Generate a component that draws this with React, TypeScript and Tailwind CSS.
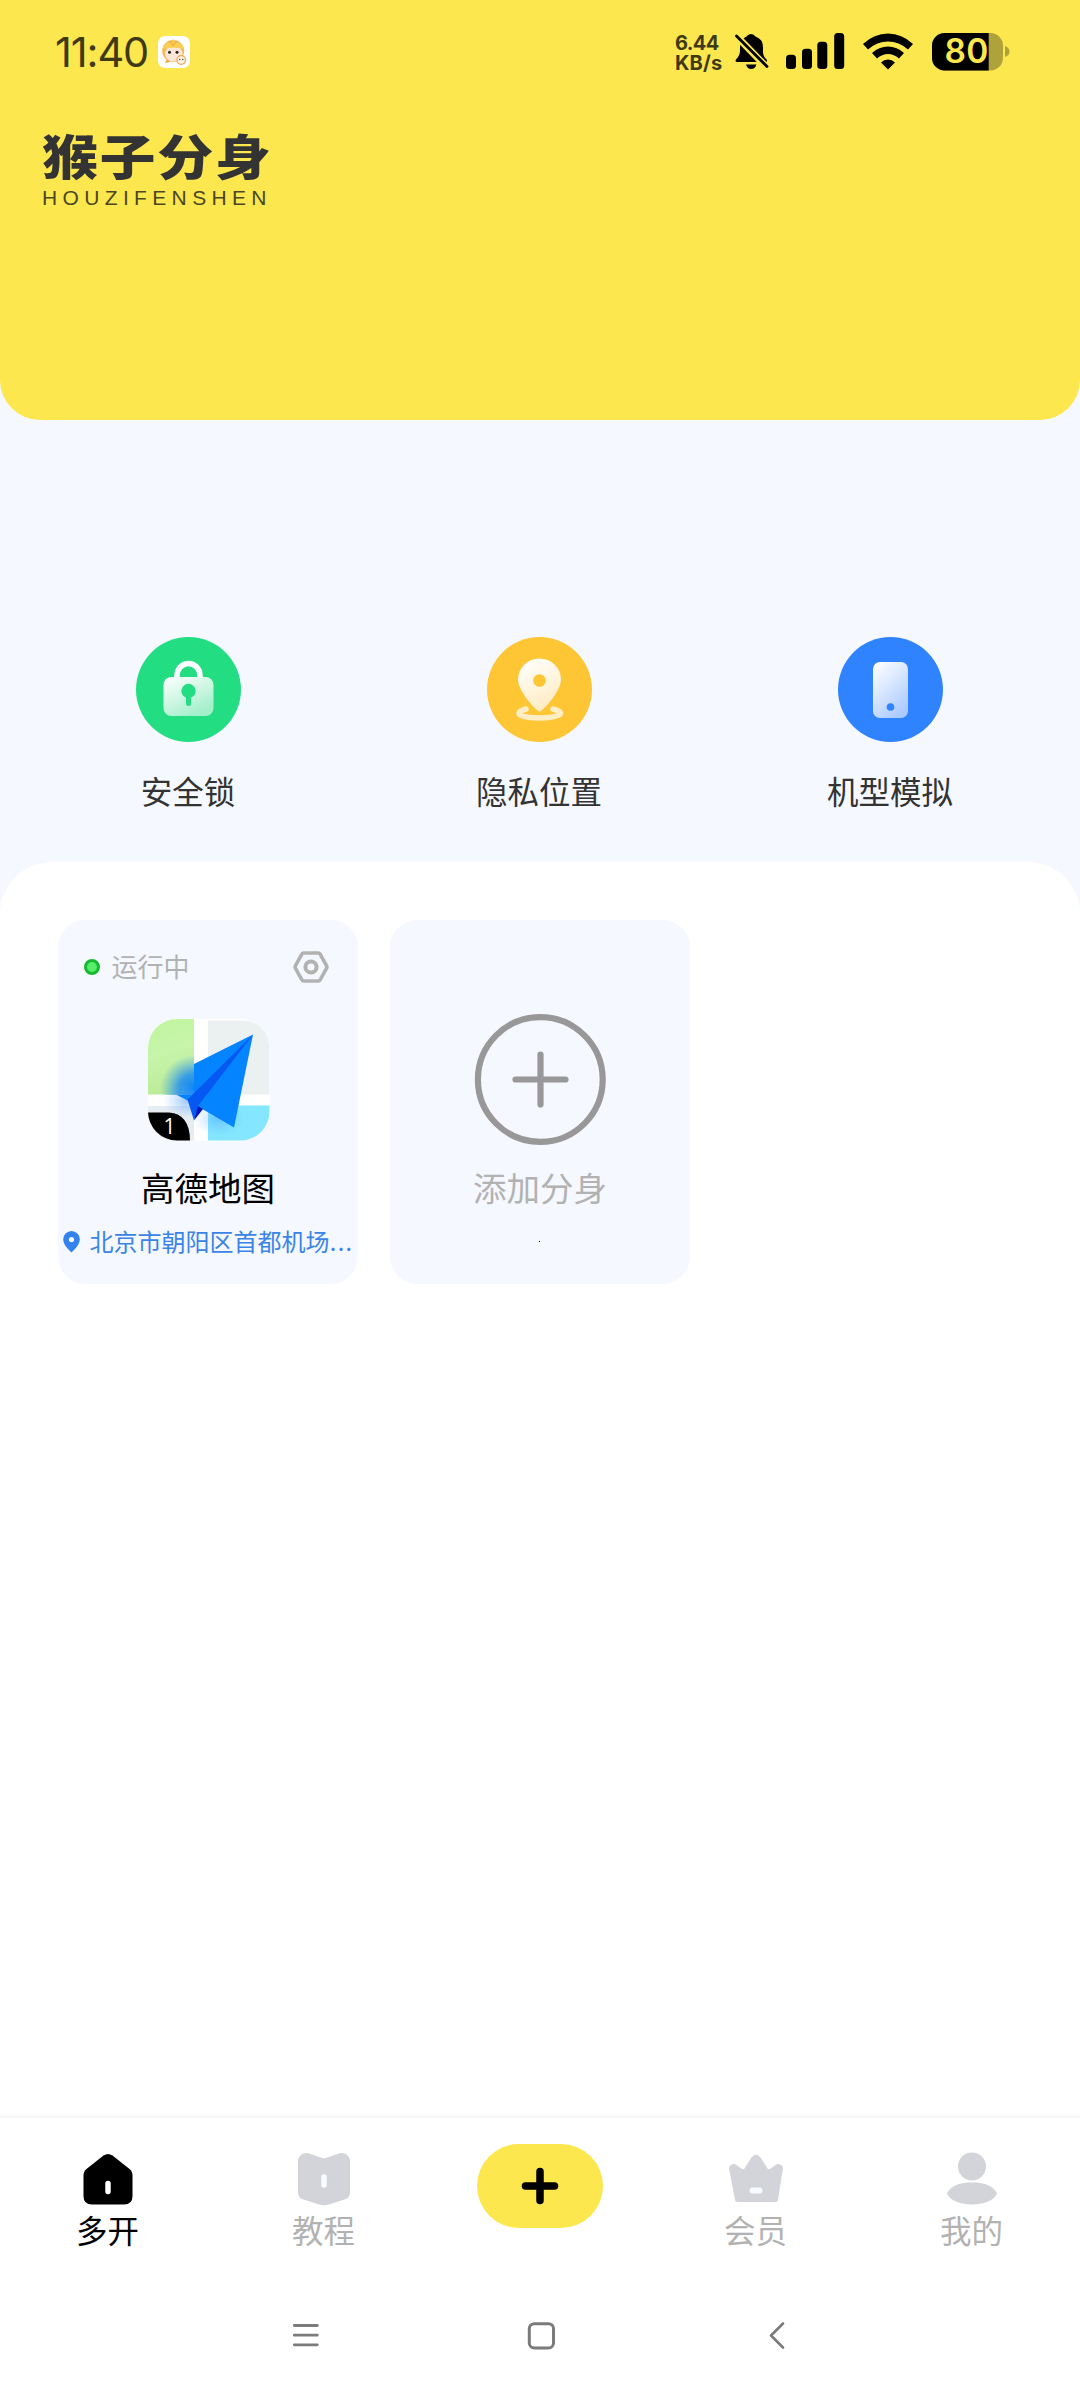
import React from 'react';

const cjk = "font-['Noto_Sans_CJK_SC','Noto_Sans',sans-serif]";

function MonkeyBadge() {
  return (
    <svg width="32" height="32" viewBox="0 0 32 32">
      <rect width="32" height="32" rx="7" fill="#fff" />
      <path d="M7 27 9 23.500 12 26Z" fill="#f0a03c" />
      <circle cx="15.200" cy="15" r="11" fill="#f7b853" />
      <ellipse cx="15.800" cy="17.800" rx="8.800" ry="7.800" fill="#fde6da" />
      <path d="M4.500 13Q6 7.500 10 6.500L12.500 7 15.200 3 18 7 20.500 6.500Q25 8 26 13 15 10.500 4.500 13Z" fill="#f8cf52" />
      <path d="M12 5 15.200 9.500 18.500 5" stroke="#f6a83b" strokeWidth="1.200" fill="none" />
      <circle cx="11.500" cy="16.200" r="1.500" fill="#2a2320" />
      <circle cx="19" cy="16.200" r="1.500" fill="#2a2320" />
      <circle cx="23.200" cy="24" r="4.300" fill="#fff3e6" stroke="#f0a550" strokeWidth="1.200" />
      <circle cx="21.700" cy="23.500" r=".7" fill="#333" />
      <circle cx="24.800" cy="23.500" r=".7" fill="#333" />
    </svg>
  );
}

function StatusBar() {
  return (
    <div className="flex h-[104px] items-start pl-[55px] pr-[70px] pt-[32px]">
      <div className="h-[40px] w-[103px] whitespace-nowrap font-['Inter',sans-serif] text-[41.5px] leading-[40px] tracking-[-1.1px] text-[#3f3a14]">11:40</div>
      <div className="mt-[4px]"><MonkeyBadge /></div>
      <div className="ml-auto flex">
        <div className="-ml-px mr-px mt-[2px] w-[59px] whitespace-nowrap font-['Inter',sans-serif] text-[20px] font-bold leading-[19.500px] text-[#3f3a14]">
          <div className="tracking-[-0.6px]">6.44</div>
          <div className="tracking-[0.2px]">KB/s</div>
        </div>
        <svg className="mt-[1px]" width="34" height="37" viewBox="0 0 34 37">
          <path d="M16 1q3 0 4.500 2.500Q28 6 28 14.500V19q0 4 3.500 7.500 1.500 2.500-1 2.500H2.500Q-.5 29 1 26.500 5 22.500 5 18v-3.500Q5 6 11.500 3.500 13 1 16 1Z" fill="#000" />
          <path d="M11 31.500H21.500Q20 36 16.200 36T11 31.500Z" fill="#000" />
          <path d="M0 1.500 32 34.500" stroke="#fce74f" strokeWidth="7" />
          <path d="M1.500 3 32 33.500" stroke="#000" strokeWidth="2.800" strokeLinecap="round" />
        </svg>
        <svg className="ml-[17px] mt-[1px]" width="59" height="36" viewBox="0 0 59 36">
          <rect x="0" y="21.800" width="10" height="14.200" rx="3.500" />
          <rect x="16" y="15.800" width="10" height="20.200" rx="3.500" />
          <rect x="31.300" y="8.800" width="10" height="27.200" rx="3.500" />
          <rect x="48.200" y="0" width="10" height="36" rx="3.500" />
        </svg>
        <svg className="ml-[18px] mt-[1px]" width="50" height="37" viewBox="0 0 50 37">
          <path d="M0 11Q11 .5 25 .5T50 11L45 16.500Q36 8.500 25 8.500T5 16.500Z" />
          <path d="M9 20Q16 13.500 25 13.500T41 20L36 25.500Q31 21 25 21T14 25.500Z" />
          <path d="M18 29.500Q21 26.500 25 26.500T32 29.500L25 36.500Z" />
        </svg>
        <div className="relative ml-[19px] mt-[0.7px] h-[38px] w-[78px]">
          <svg width="78" height="38" viewBox="0 0 78 38">
            <defs><clipPath id="batt"><rect width="71" height="37.500" rx="12.500" /></clipPath></defs>
            <g clipPath="url(#batt)">
              <rect width="71" height="38" fill="#b0a23a" />
              <rect width="56.700" height="38" fill="#000" />
            </g>
            <path d="M73 13q4.500 1.500 4.500 5.500T73 24Z" fill="#b0a23a" />
          </svg>
          <div className="absolute left-[12.5px] top-[-3px] h-[42px] font-['Inter',sans-serif] text-[33.5px] font-semibold leading-[42px] tracking-[0.4px] text-[#fce74f]">80</div>
        </div>
      </div>
    </div>
  );
}

function LockIcon() {
  return (
    <svg width="105" height="105" viewBox="0 0 105 105">
      <defs><linearGradient id="lk" x1="0" y1="0" x2=".6" y2="1"><stop stopColor="#fff" /><stop offset="1" stopColor="#a3efca" /></linearGradient></defs>
      <circle cx="52.500" cy="52.500" r="52.500" fill="#23dd83" />
      <path d="M41 42V38.500a11.500 12 0 0 1 23 0V42" fill="none" stroke="#fff" strokeWidth="5.500" />
      <rect x="27.500" y="40" width="50" height="39" rx="8" fill="url(#lk)" />
      <circle cx="52.500" cy="54" r="7.200" fill="#23dd83" />
      <path d="M52.500 56V66.500" stroke="#23dd83" strokeWidth="5" strokeLinecap="round" />
    </svg>
  );
}

function PlaceIcon() {
  return (
    <svg width="105" height="105" viewBox="0 0 105 105">
      <defs><linearGradient id="pl" x1=".2" y1="0" x2=".6" y2="1"><stop stopColor="#fff" /><stop offset="1" stopColor="#ffebc0" /></linearGradient></defs>
      <circle cx="52.500" cy="52.500" r="52.500" fill="#fec534" />
      <path d="M39 72C24 76.500 35 81 52.500 81S82 76.500 66 72" fill="none" stroke="#ffedc6" strokeWidth="5.500" strokeLinecap="round" />
      <path d="M52.500 74.500C49 74 31 54 31 42.500a21.500 21 0 0 1 43 0C74 54 56 74 52.500 74.500Z" fill="url(#pl)" />
      <circle cx="52.500" cy="43.500" r="6.300" fill="#fec534" />
    </svg>
  );
}

function DeviceIcon() {
  return (
    <svg width="105" height="105" viewBox="0 0 105 105">
      <defs><linearGradient id="dv" x1=".1" y1="0" x2=".7" y2="1"><stop stopColor="#fff" /><stop offset="1" stopColor="#abcaff" /></linearGradient></defs>
      <circle cx="52.500" cy="52.500" r="52.500" fill="#3083ff" />
      <rect x="35" y="25" width="35" height="56" rx="7" fill="url(#dv)" />
      <circle cx="52.500" cy="70" r="3.800" fill="#3083ff" />
    </svg>
  );
}

function Feature({ icon, label }: { icon: React.ReactNode; label: string }) {
  return (
    <div className="flex flex-1 flex-col items-center">
      {icon}
      <div className="mt-[26px] h-[44px] text-[31.5px] leading-[44px] text-[#333]">{label}</div>
    </div>
  );
}

function MapAppIcon() {
  return (
    <svg width="122" height="122" viewBox="0 0 122 122">
      <defs>
        <clipPath id="mapclip"><rect width="121.500" height="121.500" rx="29" /></clipPath>
        <clipPath id="leftside"><path d="M0 0H46V76H0Z" /></clipPath>
        <radialGradient id="glow"><stop stopColor="#0a82fa" /><stop offset=".45" stopColor="#1689f4" stopOpacity=".8" /><stop offset="1" stopColor="#3b9df0" stopOpacity="0" /></radialGradient>
        <radialGradient id="glow2"><stop stopColor="#338dff" stopOpacity=".5" /><stop offset="1" stopColor="#63abff" stopOpacity="0" /></radialGradient>
        <linearGradient id="grass" x1="0" y1="0" x2=".2" y2="1"><stop stopColor="#c1f49e" /><stop offset=".5" stopColor="#c6f5ab" /><stop offset="1" stopColor="#bceb98" /></linearGradient>
      </defs>
      <g clipPath="url(#mapclip)">
        <rect width="122" height="122" fill="#fff" />
        <rect width="46" height="75.500" fill="url(#grass)" />
        <path d="M60 1.500H92Q121 1.500 121.500 30V75.500H60Z" fill="#ebf0f0" />
        <rect y="87" width="46" height="35" fill="#e5ecf2" />
        <rect x="60" y="86.500" width="62" height="36" fill="#84e6ff" />
        <circle cx="46" cy="70" r="34" fill="url(#glow)" clipPath="url(#leftside)" />
        <ellipse cx="40" cy="82" rx="25" ry="17" fill="url(#glow2)" />
        <ellipse cx="70" cy="100" rx="26" ry="17" fill="url(#glow2)" opacity=".7" />
        <path d="M105 15.500 46 45V76H29L39.500 81.500 50 87.500 86 108.500Z" fill="#0584ff" />
        <path d="M49 86.500 55 90 46 101.500Z" fill="#0015b5" />
        <path d="M105 15.500 39.500 80.500 46 101.500 50 87Z" fill="#0558f2" />
        <path d="M0 93.500H21Q42 95 42 122H0Z" fill="#000" />
      </g>
      <text x="15.500" y="115" fontFamily="Open Sans" fontSize="21" fill="#fff">1</text>
    </svg>
  );
}

function CloneCard() {
  return (
    <div className="flex h-[364px] w-[300px] flex-col rounded-[27px] bg-[#f5f8ff]">
      <div className="mt-[29px] flex h-[36px] items-center pl-[26px] pr-[29px]">
        <div className="h-[16px] w-[16px] rounded-full border-[3px] border-[#16b92e] bg-[#55ed6b]" />
        <div className="-mt-[2px] ml-[11.5px] text-[26px] leading-[36px] text-[#b2b2b2]">运行中</div>
        <svg className="ml-auto" width="36" height="34" viewBox="0 0 36 34">
          <path d="M10.500 3H25.500Q26.500 3 27 4L33.500 15.500Q34.300 17 33.500 18.500L27 30Q26.500 31 25.500 31H10.500Q9.500 31 9 30L2.500 18.500Q1.700 17 2.500 15.500L9 4Q9.500 3 10.500 3Z" fill="none" stroke="#b2b2b2" strokeWidth="3.600" />
          <circle cx="18" cy="17" r="5.600" fill="none" stroke="#b2b2b2" strokeWidth="4" />
        </svg>
      </div>
      <div className="ml-[90px] mt-[33.5px] h-[122px]"><MapAppIcon /></div>
      <div className="mt-[21px] h-[50px] text-center text-[33.5px] leading-[50px] text-black">高德地图</div>
      <div className="mt-[14px] flex h-[32px] items-center pl-[5px]">
        <svg className="mt-[1px]" width="17" height="22" viewBox="0 0 17 22">
          <path fillRule="evenodd" d="M8.500 0a8.300 8.300 0 0 1 8.300 8.500C16.800 14 10 20 8.500 21.500 7 20 .2 14 .2 8.500A8.300 8.300 0 0 1 8.500 0Zm0 6a2.600 2.600 0 1 0 0 5.200 2.600 2.600 0 0 0 0-5.200Z" fill="#3482ee" />
        </svg>
        <div className="ml-[9.5px] whitespace-nowrap text-[24px] leading-[32px] text-[#3a84e8]">北京市朝阳区首都机场<span className="font-['Inter',sans-serif] tracking-[1px]">...</span></div>
      </div>
    </div>
  );
}

function AddCard() {
  return (
    <div className="flex h-[364px] w-[300px] flex-col items-center rounded-[27px] bg-[#f5f8ff] pt-[94px]">
      <svg width="132" height="132" viewBox="0 0 132 132" fill="none" stroke="#989898" strokeWidth="6.200" strokeLinecap="round">
        <circle cx="66.300" cy="65.500" r="62.400" />
        <path d="M41.500 65.500H91.500M66.500 40.500V90.500" />
      </svg>
      <div className="mt-[15.500px] h-[50px] text-[33.5px] leading-[50px] text-[#b2b2b2]">添加分身</div>
      <div className="mr-px mt-[29px] h-px w-px bg-black" />
    </div>
  );
}

function Tab({ icon, label, active }: { icon: React.ReactNode; label: string; active?: boolean }) {
  return (
    <div className="flex w-[216px] flex-col items-center pt-[33px]">
      <div className="h-[56px]">{icon}</div>
      <div className={active ? 'mr-px text-[31.5px] leading-[44px] text-black' : 'mr-px text-[31.5px] leading-[44px] text-[#b2b2b2]'}>{label}</div>
    </div>
  );
}

function TabBar() {
  return (
    <div className="flex h-[162px]">
      <Tab
        active
        label="多开"
        icon={
          <svg width="54" height="56" viewBox="0 0 54 56">
            <path d="M22.500 4.500Q27 1.500 31.500 4.500L48.500 18Q51.500 20.500 51.500 24.500V45Q51.500 53.500 43 53.500H11Q2.500 53.500 2.500 45V24.500Q2.500 20.500 5.500 18Z" fill="#000" />
            <path d="M27 32.500V40.500" stroke="#fff" strokeWidth="5.500" strokeLinecap="round" />
          </svg>
        }
      />
      <Tab
        label="教程"
        icon={
          <svg width="54" height="56" viewBox="0 0 54 56">
            <path d="M1 9Q3 1.500 10.500 2L27 7.500 43.500 2Q51 1.500 53 9V42Q52.500 46 49 48L32 53.500Q27 55 22 53.500L5 48Q1.500 46 1 42Z" fill="#d3d4da" />
            <path d="M27 26V34" stroke="#f8fcff" strokeWidth="5.500" strokeLinecap="round" />
          </svg>
        }
      />
      <div className="flex w-[216px] justify-center pt-[26px]">
        <div className="flex h-[84px] w-[126px] items-center justify-center rounded-full bg-[#fce74f]">
          <svg width="38" height="38" viewBox="0 0 38 38" stroke="#000" strokeWidth="7.500" strokeLinecap="round">
            <path d="M4.500 19H33.500M19 4.500V33.500" />
          </svg>
        </div>
      </div>
      <Tab
        label="会员"
        icon={
          <svg width="54" height="56" viewBox="0 0 54 56">
            <path d="M0 17Q1 12.500 6 13L13 18Q14.800 19 15.800 17L22 7Q27 .5 32 7L38.200 17Q39.200 19 41 18L48 13Q53 12.500 54 17L49 49Q48.500 51 46.500 51H8.500Q6.500 51 6 49Z" fill="#d3d4da" />
            <rect x="20.500" y="36.500" width="13" height="6" rx="3" fill="#f8fcff" />
          </svg>
        }
      />
      <Tab
        label="我的"
        icon={
          <svg width="54" height="56" viewBox="0 0 54 56">
            <circle cx="27" cy="15.500" r="14" fill="#d3d4da" />
            <path d="M2 42.500C6 34 16 31.500 27 31.500S48 34 52 42.500C49 50 38 53.500 27 53.500S5 50 2 42.500Z" fill="#d3d4da" />
          </svg>
        }
      />
    </div>
  );
}

function SystemNav() {
  return (
    <div className="flex h-[120px] items-start pl-[292px] pt-[41px]">
      <svg width="28" height="30" viewBox="0 0 28 30" stroke="#7b7b7b" strokeWidth="2.800" strokeLinecap="round">
        <path d="M2.300 4.500H25.300M2.300 14.200H25.300M2.300 23.800H25.300" />
      </svg>
      <svg className="ml-[207px]" width="30" height="30" viewBox="0 0 30 30">
        <rect x="2.300" y="2.700" width="24.200" height="24.200" rx="5" fill="none" stroke="#7b7b7b" strokeWidth="3" />
      </svg>
      <svg className="ml-[211px]" width="20" height="30" viewBox="0 0 20 30" fill="none" stroke="#7b7b7b" strokeWidth="2.600" strokeLinecap="round" strokeLinejoin="round">
        <path d="M15 2.500 3 14.500 15 26.500" />
      </svg>
    </div>
  );
}

export default function App() {
  return (
    <div className={`flex h-[2400px] w-[1080px] flex-col overflow-hidden bg-[#f5f8ff] ${cjk}`}>
      <header className="h-[420px] shrink-0 rounded-b-[40px] bg-[#fce74f]">
        <StatusBar />
        <div className="ml-[42px] mt-[18px] h-[68px] w-[240px] text-[#333]">
          <div className="h-[60px] w-[204px] origin-[0_42px] scale-x-[1.12] scale-y-[0.95] whitespace-nowrap text-[50px] font-black leading-[64px] tracking-[1.4px]">猴子分身</div>
          <div className="mt-[3px] whitespace-nowrap font-['Liberation_Sans',sans-serif] text-[21px] leading-[26px] tracking-[5.35px] text-[#4b4724]">HOUZIFENSHEN</div>
        </div>
      </header>
      <div className="mt-[217px] flex h-[225px] shrink-0 pl-[12.5px] pr-[14.5px]">
        <Feature icon={<LockIcon />} label="安全锁" />
        <Feature icon={<PlaceIcon />} label="隐私位置" />
        <Feature icon={<DeviceIcon />} label="机型模拟" />
      </div>
      <main className="flex flex-1 flex-col rounded-t-[52px] bg-white">
        <div className="flex gap-[32px] pl-[58px] pt-[58px]">
          <CloneCard />
          <AddCard />
        </div>
        <div className="mt-auto">
          <div className="h-[5px] bg-linear-to-b from-white to-[#f5f5f5]" />
          <TabBar />
          <SystemNav />
        </div>
      </main>
    </div>
  );
}
